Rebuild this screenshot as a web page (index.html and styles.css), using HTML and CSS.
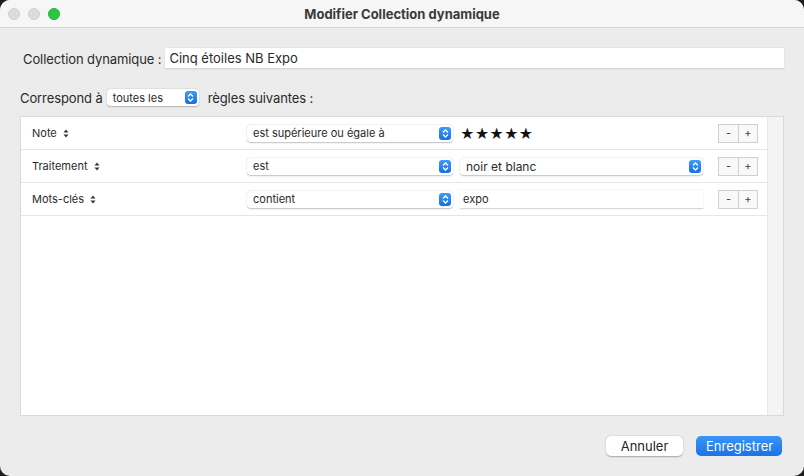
FILE: index.html
```html
<!DOCTYPE html>
<html lang="fr">
<head>
    <meta charset="UTF-8">
    <title>Modifier Collection dynamique</title>
    <link rel="stylesheet" href="styles.css">
</head>
<body>
    <div class="window">
        <div class="titlebar">
            <div class="lights">
                <span class="light"></span>
                <span class="light"></span>
                <span class="light light-green"></span>
            </div>
            <div class="title">Modifier Collection dynamique</div>
        </div>

        <div class="content">
            <div class="name-row">
                <label class="name-label">Collection dynamique :</label>
                <div class="text-field">Cinq étoiles NB Expo</div>
            </div>

            <div class="match-row">
                <span>Correspond à</span>
                <div class="popup popup-small">
                    <span>toutes les</span>
                    <span class="popup-arrow"><svg width="7" height="9" viewBox="0 0 7 9"><path d="M1 3.5 L3.5 1 L6 3.5 M1 5.5 L3.5 8 L6 5.5" fill="none" stroke="#fff" stroke-width="1.3"/></svg></span>
                </div>
                <span>règles suivantes :</span>
            </div>

            <div class="rules">
                <div class="rules-list">
                    <div class="rule">
                        <div class="field-select">Note <svg class="updown" width="6" height="9" viewBox="0 0 6 9"><path d="M0.5 3.5 L3 0.5 L5.5 3.5 Z M0.5 5.5 L3 8.5 L5.5 5.5 Z" fill="#333"/></svg></div>
                        <div class="popup popup-op">
                            <span>est supérieure ou égale à</span>
                            <span class="popup-arrow"><svg width="7" height="9" viewBox="0 0 7 9"><path d="M1 3.5 L3.5 1 L6 3.5 M1 5.5 L3.5 8 L6 5.5" fill="none" stroke="#fff" stroke-width="1.3"/></svg></span>
                        </div>
                        <div class="value stars">★★★★★</div>
                        <div class="stepper"><span>-</span><span>+</span></div>
                    </div>
                    <div class="rule">
                        <div class="field-select">Traitement <svg class="updown" width="6" height="9" viewBox="0 0 6 9"><path d="M0.5 3.5 L3 0.5 L5.5 3.5 Z M0.5 5.5 L3 8.5 L5.5 5.5 Z" fill="#333"/></svg></div>
                        <div class="popup popup-op">
                            <span>est</span>
                            <span class="popup-arrow"><svg width="7" height="9" viewBox="0 0 7 9"><path d="M1 3.5 L3.5 1 L6 3.5 M1 5.5 L3.5 8 L6 5.5" fill="none" stroke="#fff" stroke-width="1.3"/></svg></span>
                        </div>
                        <div class="value">
                            <div class="popup popup-value">
                                <span>noir et blanc</span>
                                <span class="popup-arrow"><svg width="7" height="9" viewBox="0 0 7 9"><path d="M1 3.5 L3.5 1 L6 3.5 M1 5.5 L3.5 8 L6 5.5" fill="none" stroke="#fff" stroke-width="1.3"/></svg></span>
                            </div>
                        </div>
                        <div class="stepper"><span>-</span><span>+</span></div>
                    </div>
                    <div class="rule">
                        <div class="field-select">Mots-clés <svg class="updown" width="6" height="9" viewBox="0 0 6 9"><path d="M0.5 3.5 L3 0.5 L5.5 3.5 Z M0.5 5.5 L3 8.5 L5.5 5.5 Z" fill="#333"/></svg></div>
                        <div class="popup popup-op">
                            <span>contient</span>
                            <span class="popup-arrow"><svg width="7" height="9" viewBox="0 0 7 9"><path d="M1 3.5 L3.5 1 L6 3.5 M1 5.5 L3.5 8 L6 5.5" fill="none" stroke="#fff" stroke-width="1.3"/></svg></span>
                        </div>
                        <div class="value">
                            <div class="small-field">expo</div>
                        </div>
                        <div class="stepper"><span>-</span><span>+</span></div>
                    </div>
                </div>
                <div class="scroll-track"></div>
            </div>

            <div class="actions">
                <button class="btn btn-cancel">Annuler</button>
                <button class="btn btn-save">Enregistrer</button>
            </div>
        </div>
    </div>
</body>
</html>
```

FILE: styles.css
```css
* {
    margin: 0;
    padding: 0;
    box-sizing: border-box;
}

html, body {
    width: 804px;
    height: 476px;
    background: #1e1e1e;
    overflow: hidden;
}

body {
    font-family: Inter, 'Noto Sans', 'Liberation Sans', sans-serif;
    font-size: 13px;
    color: #2a2a2a;
}

.window {
    width: 804px;
    height: 476px;
    background: #ececec;
    border-radius: 10px;
    overflow: hidden;
    display: flex;
    flex-direction: column;
}

/* Заголовок окна */
.titlebar {
    height: 28px;
    background: #f6f6f6;
    border-bottom: 1px solid #d6d6d6;
    display: flex;
    align-items: center;
    position: relative;
}

.lights {
    display: flex;
    gap: 8px;
    padding-left: 8px;
}

.light {
    width: 12px;
    height: 12px;
    border-radius: 50%;
    background: #dcdcdc;
    border: 1px solid #d0d0d0;
}

.light-green {
    background: #2ac840;
    border-color: #20b234;
}

.title {
    position: absolute;
    left: 0;
    right: 0;
    text-align: center;
    font-weight: 700;
    font-size: 13px;
    color: #3a3a3a;
}

.content {
    flex: 1;
    padding: 20px 20px 0 20px;
    display: flex;
    flex-direction: column;
}

.name-row {
    display: flex;
    align-items: center;
    padding-left: 3px;
    gap: 4px;
}

.name-label {
    font-size: 13px;
    letter-spacing: -0.1px;
}

.text-field {
    flex: 1;
    height: 21px;
    background: #fff;
    border-bottom: 1px solid #d4d4d4;
    box-shadow: 0 0 0 0.5px #dedede;
    padding: 2px 4px;
    font-size: 13px;
}

.match-row {
    display: flex;
    align-items: center;
    gap: 4px;
    margin-top: 20px;
    letter-spacing: -0.1px;
}

.popup {
    display: flex;
    align-items: center;
    justify-content: space-between;
    background: #fff;
    border-radius: 4px;
    box-shadow: 0 0.5px 1.5px rgba(0, 0, 0, 0.25);
    height: 17px;
    padding: 0 2px 0 6px;
    font-size: 12px;
    letter-spacing: 0;
}

.popup-small {
    width: 92px;
    margin: 0 5px 0 0;
    font-size: 11px;
}

.popup-arrow {
    width: 12px;
    height: 13px;
    background: linear-gradient(#3e9bf8, #1470e6);
    border-radius: 3px;
    display: flex;
    align-items: center;
    justify-content: center;
}

.rules {
    margin-top: 10px;
    height: 300px;
    display: flex;
    border: 1px solid #dadada;
    background: #fff;
}

.rules-list {
    flex: 1;
}

.rule {
    height: 33px;
    display: flex;
    align-items: center;
    border-bottom: 1px solid #e6e6e6;
}

.field-select {
    width: 226px;
    padding-left: 11px;
    font-size: 11px;
    display: flex;
    align-items: center;
}

.updown {
    margin-left: 6px;
}

.popup-op {
    width: 206px;
    font-size: 11px;
}

.value {
    width: 243px;
    margin-left: 7px;
    font-size: 11px;
}

.stars {
    font-size: 14px;
    letter-spacing: 0;
    color: #111;
}

.popup-value {
    width: 243px;
}

.small-field {
    height: 19px;
    border-bottom: 1px solid #d8d8d8;
    box-shadow: 0 0 0 0.5px #ececec;
    padding: 2px 3px;
}

.stepper {
    display: flex;
    margin-left: 15px;
    border: 1px solid #cfcfcf;
    height: 19px;
    background: #f8f8f8;
}

.stepper span {
    width: 19px;
    display: flex;
    align-items: center;
    justify-content: center;
    font-size: 11px;
    color: #444;
}

.stepper span + span {
    border-left: 1px solid #cfcfcf;
}

.scroll-track {
    width: 16px;
    background: #f4f4f4;
    border-left: 1px solid #e8e8e8;
}

.actions {
    display: flex;
    justify-content: flex-end;
    gap: 13px;
    margin-top: 20px;
    padding-right: 2px;
}

.btn {
    height: 20px;
    border: none;
    border-radius: 5px;
    font-family: Inter, 'Noto Sans', 'Liberation Sans', sans-serif;
    font-size: 13px;
    padding: 0 10px;
}

.btn-cancel {
    width: 77px;
    background: #fff;
    color: #262626;
    box-shadow: 0 0.5px 1.5px rgba(0, 0, 0, 0.3);
}

.btn-save {
    width: 86px;
    background: linear-gradient(#3a95f7, #1a73e8);
    color: #fff;
}
```
